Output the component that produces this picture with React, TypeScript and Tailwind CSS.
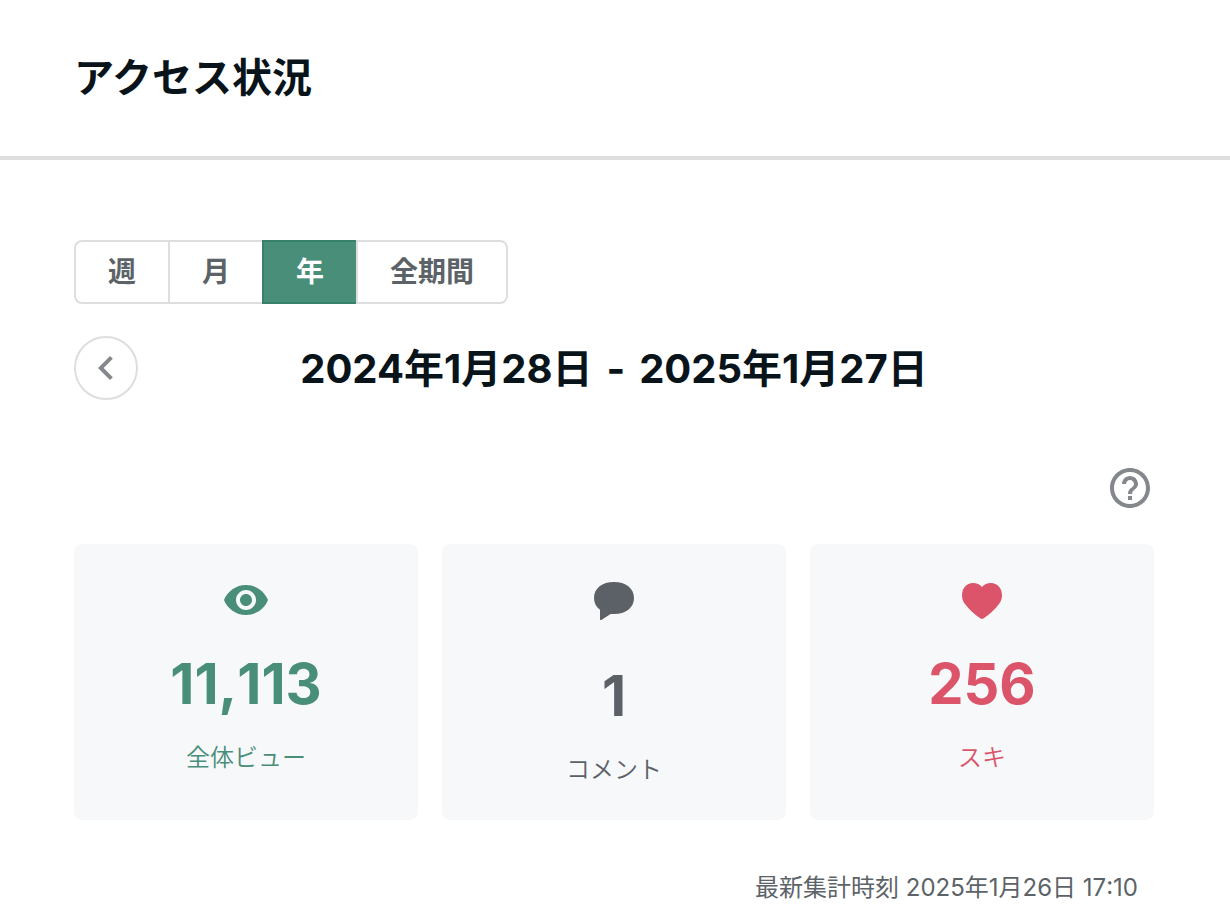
import React, { useState } from 'react';

const periods = ['週', '月', '年', '全期間'];

const stats = [
  {
    id: 'views',
    label: '全体ビュー',
    value: '11,113',
    color: 'text-[#488e78]',
    gap: 'mt-8',
    icon: (
      <path d="M12 4.5C7 4.5 2.73 7.61 1 12c1.73 4.39 6 7.5 11 7.5s9.27-3.11 11-7.5c-1.73-4.39-6-7.5-11-7.5zM12 17c-2.76 0-5-2.24-5-5s2.24-5 5-5 5 2.24 5 5-2.24 5-5 5zm0-8c-1.66 0-3 1.34-3 3s1.34 3 3 3 3-1.34 3-3-1.34-3-3-3z" />
    )
  },
  {
    id: 'comments',
    label: 'コメント',
    value: '1',
    color: 'text-[#5c6168]',
    gap: 'mt-11',
    icon: (
      <path d="M12 3C6.1 3 2 6.1 2 11c0 2.4 1.1 4.5 3 5.9v4.7c0 .4.5.6.9.3L10.3 19H12c5.9 0 10-3.1 10-8s-4.1-8-10-8z" />
    )
  },
  {
    id: 'likes',
    label: 'スキ',
    value: '256',
    color: 'text-[#db546a]',
    gap: 'mt-8',
    icon: (
      <path d="M16.5 3.5C14.7 3.5 13 4.1 12 5.5 11 4.1 9.3 3.5 7.5 3.5 4.3 3.5 2 6.1 2 9.6c0 1.8.5 3.1 1.6 4.5 2 2.6 4.9 5.2 7.7 7.2.5.3.9.3 1.4 0 2.8-2 5.7-4.6 7.7-7.2 1.1-1.4 1.6-2.7 1.6-4.5 0-3.5-2.3-6.1-5.5-6.1z" />
    )
  }
];

function Icon({ children }: { children: React.ReactNode }) {
  return (
    <svg viewBox="0 0 24 24" className="size-12 shrink-0 fill-current" aria-hidden="true">
      {children}
    </svg>
  );
}

export default function App() {
  const [period, setPeriod] = useState('年');

  return (
    <div className="min-h-screen bg-white font-['Inter','Noto_Sans_CJK_JP',sans-serif] text-[#08131a]" lang="ja">
      <header className="border-b-4 border-[#dedede] pt-12 pr-[76px] pb-12 pl-[74px]">
        <h1 className="text-[40px] leading-[60px] font-bold">アクセス状況</h1>
      </header>

      <main className="pt-20 pr-[76px] pl-[74px]">
        <div className="flex">
          {periods.map((item) => (
            <button
              key={item}
              onClick={() => setPeriod(item)}
              className={`h-16 border-y-2 border-l-2 px-8 text-[28px] leading-10 font-bold first:rounded-l-lg last:rounded-r-lg last:border-r-2 ${
                period === item ? 'border-[#37806a] bg-[#488e78] text-white' : 'border-[#dcdedf] text-[#5c6368]'
              }`}
            >
              {item}
            </button>
          ))}
        </div>

        <div className="mt-8 grid grid-cols-[64px_1fr_64px] items-center">
          <button
            aria-label="前の期間"
            className="flex size-16 items-center justify-center rounded-full border-2 border-[#dcdedf] text-[#84888d]"
          >
            <Icon>
              <path d="M15.41 7.41L14 6l-6 6 6 6 1.41-1.41L10.83 12z" />
            </Icon>
          </button>
          <h2 className="flex justify-center gap-3.5 pt-0.5 text-[40px] leading-[60px] font-bold">
            <span>2024年1月28日</span>
            <span>-</span>
            <span>2025年1月27日</span>
          </h2>
        </div>

        <div className="mt-16 flex justify-end">
          <button aria-label="ヘルプ" className="text-[#84888d]">
            <Icon>
              <path d="M11 18h2v-2h-2v2zm1-16C6.48 2 2 6.48 2 12s4.48 10 10 10 10-4.48 10-10S17.52 2 12 2zm0 18c-4.41 0-8-3.59-8-8s3.59-8 8-8 8 3.59 8 8-3.59 8-8 8zm0-14c-2.21 0-4 1.79-4 4h2c0-1.1.9-2 2-2s2 .9 2 2c0 2-3 1.75-3 5h2c0-2.25 3-2.5 3-5 0-2.21-1.79-4-4-4z" />
            </Icon>
          </button>
        </div>

        <div className="mt-8 grid grid-cols-3 gap-6">
          {stats.map((stat) => (
            <div
              key={stat.id}
              className={`flex flex-col items-center rounded-lg bg-[#f7f8fa] pt-8 pb-8 ${stat.color}`}
            >
              <Icon>{stat.icon}</Icon>
              <p className={`text-[56px] leading-14 font-bold [font-kerning:none] ${stat.gap}`}>{stat.value}</p>
              <p className="mt-7 text-2xl leading-9 font-[350]">{stat.label}</p>
            </div>
          ))}
        </div>

        <p className="mt-12 pt-0.5 pr-4 text-right text-2xl leading-9 text-[#5c6368] [font-kerning:none]">
          最新集計時刻 2025年1月26日 17:10
        </p>
      </main>
    </div>
  );
}
